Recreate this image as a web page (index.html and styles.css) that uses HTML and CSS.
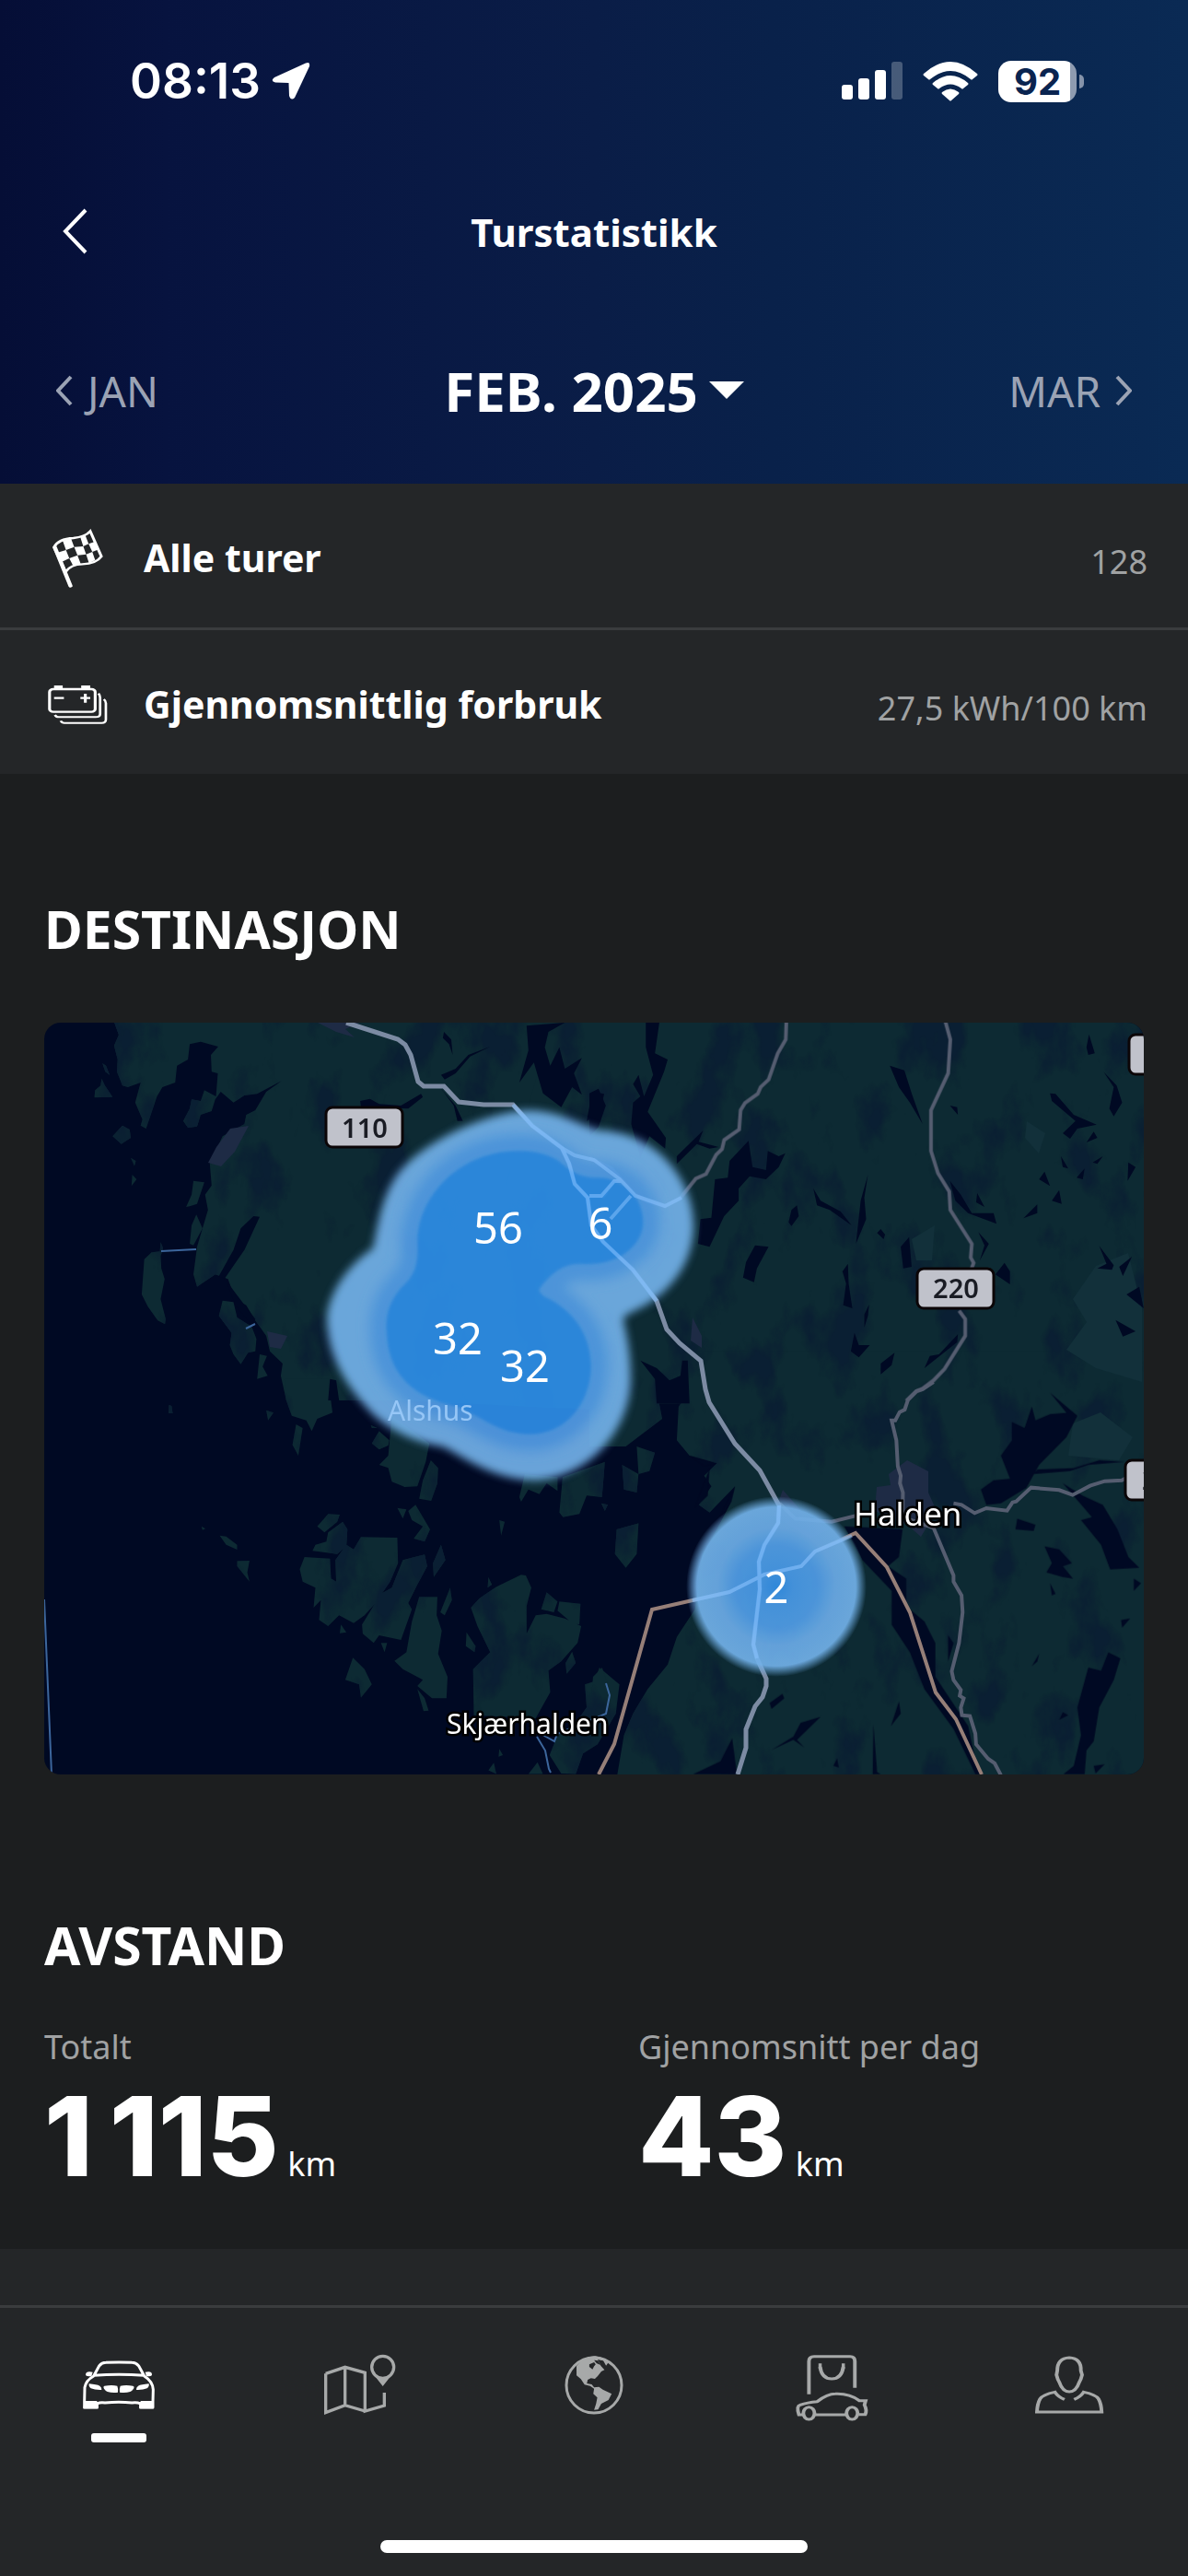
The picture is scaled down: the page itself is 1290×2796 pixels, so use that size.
FILE: index.html
```html
<!DOCTYPE html>
<html lang="no">
<head>
    <meta charset="UTF-8">
    <meta name="viewport" content="width=device-width, initial-scale=1.0">
    <title>Turstatistikk</title>
    <link rel="stylesheet" href="styles.css">
</head>
<body>
    <header class="header">
        <div class="status-bar">
            <div class="status-left">
                <span class="clock">08:13</span>
                <svg width="42" height="42" viewBox="0 0 42 42" fill="#fff"><path d="M37 1.500Q42-.5 41 5L25 39Q21 43 19 37L18.500 23 4 22.500Q-2 21 3 17Z"/></svg>
            </div>
            <div class="status-right">
                <svg width="66" height="42" viewBox="0 0 66 42" fill="#fff">
                    <rect x="0" y="25" width="12" height="16" rx="3"/>
                    <rect x="18" y="18" width="12" height="23" rx="3"/>
                    <rect x="36" y="9" width="12" height="32" rx="3"/>
                    <rect x="54" y="0" width="12" height="41" rx="3" opacity=".25"/>
                </svg>
                <svg width="60" height="43" viewBox="0 0 60 43" fill="#fff">
                    <path d="M1 13Q30-13 59 13Q60 14 59 15L54 19Q53 20 52 19Q30 1 8 19Q7 20 6 19L1 15Q0 14 1 13Z"/>
                    <path d="M11 23Q30 7 49 23Q50 24 49 25L44 29Q43 30 42 29Q30 20 18 29Q17 30 16 29L11 25Q10 24 11 23Z"/>
                    <path d="M21 33Q30 26 39 33Q40 34 39 35L31 42Q30 43 29 42L21 35Q20 34 21 33Z"/>
                </svg>
                <div class="battery">92</div>
            </div>
        </div>
        <div class="title-bar">
            <button class="back" aria-label="Tilbake">
                <svg width="28" height="50" viewBox="0 0 28 50" fill="none" stroke="#fff" stroke-width="4"><path d="M26 2 4 25 26 48"/></svg>
            </button>
            <h1>Turstatistikk</h1>
        </div>
        <div class="months">
            <button class="month">
                <svg width="18" height="34" viewBox="0 0 18 34"><path d="M16 2 2 17 16 32"/></svg>
                JAN
            </button>
            <button class="month-current">
                FEB. 2025
                <svg width="38" height="20" viewBox="0 0 38 20" fill="#fff"><path d="M0 0H38L19 19Z"/></svg>
            </button>
            <button class="month next">
                MAR
                <svg width="18" height="34" viewBox="0 0 18 34"><path d="M2 2 16 17 2 32"/></svg>
            </button>
        </div>
    </header>

    <div class="row">
        <svg width="72" height="72" viewBox="0 0 72 72">
            <g transform="scale(.4464 .3333) translate(-107 -141)">
                <path d="M133 223 171 348" stroke="#fff" stroke-width="10" stroke-linecap="round"/>
                <path d="M131 222Q142 194 178 192Q207 188 219 170L246 252Q233 276 200 277Q171 278 159 302Z" fill="none" stroke="#fff" stroke-width="7"/>
                <path fill="#fff" d="M152 201 172 193 180 221 160 231ZM195 190 207 183 215 211 202 219ZM138 240 160 231 168 258 148 271ZM180 221 202 219 209 245 188 248ZM215 211 232 203 240 229 224 237ZM168 258 188 248 196 277 177 281ZM209 245 224 237 231 264 216 274Z"/>
            </g>
        </svg>
        <span class="row-label">Alle turer</span>
        <span class="row-value">128</span>
    </div>
    <div class="row">
        <svg width="72" height="72" viewBox="0 0 72 72">
            <g transform="scale(.4464 .3333) translate(-107 -618)" fill="none" stroke="#fff" stroke-width="6">
                <rect x="120" y="684" width="111" height="74" rx="9" stroke-width="7"/>
                <path d="M131 678H152M197 678H219" stroke-width="12"/>
                <path d="M131 713H155M195 713H219M207 699V728" stroke-width="7"/>
                <path d="M239 698Q243 704 243 712V764Q243 775 232 775H142Q136 775 133 768"/>
                <path d="M252 717Q257 722 257 730V783Q257 794 247 794H156Q150 794 147 787"/>
            </g>
        </svg>
        <span class="row-label">Gjennomsnittlig forbruk</span>
        <span class="row-value">27,5 kWh/100 km</span>
    </div>

    <main class="content">
        <section class="destination">
            <h2>DESTINASJON</h2>
            <svg class="map" viewBox="48 1110 1194 816" preserveAspectRatio="xMidYMid slice">
                <defs>
                    <!-- darker patches scattered over the land -->
                    <filter id="terrain" x="0" y="0" width="100%" height="100%" color-interpolation-filters="sRGB">
                        <feTurbulence type="fractalNoise" baseFrequency=".02 .012" numOctaves="5" seed="3"/>
                        <feColorMatrix values="0 0 0 0 .04  0 0 0 0 .12  0 0 0 0 .2  0 0 0 5 -2.6"/>
                        <feComposite in2="SourceGraphic" operator="in" result="patches"/>
                        <feMerge><feMergeNode in="SourceGraphic"/><feMergeNode in="patches"/></feMerge>
                    </filter>
                    <filter id="soft" x="-20%" y="-20%" width="140%" height="140%"><feGaussianBlur stdDeviation="15"/></filter>
                    <filter id="softer" x="-20%" y="-20%" width="140%" height="140%"><feGaussianBlur stdDeviation="20"/></filter>
                    <filter id="edge" x="-20%" y="-20%" width="140%" height="140%"><feGaussianBlur stdDeviation="5"/></filter>
                    <radialGradient id="spot">
                        <stop offset="0" stop-color="#3391e9"/>
                        <stop offset=".2" stop-color="#4a9be9"/>
                        <stop offset=".45" stop-color="#529fe9"/>
                        <stop offset=".65" stop-color="#6cade9"/>
                        <stop offset=".88" stop-color="#73b2ea"/>
                        <stop offset="1" stop-color="#73b2ea" stop-opacity="0"/>
                    </radialGradient>
                </defs>
                <rect x="48" y="1110" width="1194" height="816" fill="#000923"/>

                <g class="land" filter="url(#terrain)">
                    <g transform="translate(40 1100) scale(.3954 .3333)">
                        <path d="M210 20 225 70 212 105 222 150 220 190 235 235 250 240 285 225 270 290 290 345 285 365 300 375 310 340 330 270 345 240 380 225 385 170 415 150 420 100 450 92 498 108 478 135 480 190 497 195 492 270 460 250 450 285 425 280 420 310 402 350 415 372 440 368 450 330 480 318 490 280 505 255 540 290 570 267 605 262 672 220 630 255 600 315 575 330 570 360 510 400 475 490 480 560 462 590 470 640 440 760 430 850 440 890 490 850 525 865 545 930 575 950 600 1000 630 1050 640 1100 675 1140 670 1180 685 1260 1000 1260 1700 1300 1700 20Z"/>
                        <path d="M180 162 190 170 200 200 188 190ZM178 212 187 235 208 272 158 274 160 250 175 235ZM235 365 255 378 258 405 232 425 208 400ZM258 470 272 480 268 497ZM262 525 274 540 260 562ZM430 545 460 550 440 620 420 628 410 630 425 590ZM438 655 455 700 430 755 420 750 425 690ZM340 745 347 765 340 790 342 830 351 865 340 930 354 995 352 1012 332 1000 305 955 288 915 295 800 315 778 338 775ZM510 935 540 940 550 990 590 1020 603 1060 600 1100 580 1105 560 1142 540 1110 530 1080 535 1040 500 985ZM612 1110 632 1115 620 1150 634 1180 605 1190Z"/>
                    </g>
                    <g transform="translate(640 1100) scale(.3954 .3333)">
                        <path d="M-100 20H1530V1270H-400Z"/>
                    </g>
                    <g transform="translate(40 1500) scale(.3954 .3333)">
                        <path d="M680-10 685 60 700 110 740 125 755 160 770 120 812 100 800-10ZM820-20 850 50 870-10ZM363 75 370 78 373 102 362 102ZM630 92 650 100 635 125ZM712 138 730 150 718 240 702 205ZM917 140 935 150 920 150ZM940 160 968 190 965 207 940 220 920 200ZM975 110 1078 200 1068 260 1045 340 1010 342 975 325 965 280 940 270 965 240ZM1082 255 1102 280 1100 330 1083 387 1050 380 1060 320ZM1340 300 1430 310 1430 355 1400 330 1380 365 1350 350 1330 390 1325 375ZM1444 310 1560 260 1552 375 1510 370 1490 430 1445 440 1435 425Z"/>
                        <path d="M452 470 463 478 455 482ZM502 500 520 503 550 530 550 546 520 530ZM550 583 584 582 578 620 584 650 550 600ZM770 470 800 430 832 432 825 455 790 490ZM840 455 853 480 850 535 825 560 757 550 765 530 795 520 800 490ZM735 570 805 575 808 640 822 650 820 580 850 530 870 545 890 505 990 507 992 590 970 650 930 720 900 760 870 785 830 760 800 795 775 775 780 710 760 735 765 670 730 650 722 610ZM1005 580 1065 562 1072 600 1045 660 1020 720 1030 740 1000 840 940 825 925 850 895 820 893 790 945 690 975 670ZM1050 700 1100 700 1098 760 1112 810 1102 885 1128 960 1125 1030 1085 1030 1045 990 1060 970 1005 935 982 908 1015 880 1030 780ZM868 898 900 935 920 985 890 1028 885 985 847 970ZM1045 1000 1065 1030 1076 1070 1062 1072ZM1135 670 1140 710 1120 760 1108 750ZM1110 530 1122 580 1090 635 1088 590ZM1040 400 1080 480 1065 520 1035 510 1060 470 1030 450 1020 420ZM835 790 850 815 832 818ZM945 850 962 850 955 880ZM990 410 1015 415 1005 445ZM1180 815 1205 860 1202 880 1178 860Z"/>
                        <path d="M1330 628 1343 630 1358 670 1345 730 1345 820 1370 760 1400 755 1450 770 1495 795 1485 850 1440 910 1405 940 1410 1010 1370 1095 1200 1085 1198 935 1245 880 1210 795 1192 735 1215 705 1260 668ZM1400 685 1430 715 1420 750 1385 740ZM1435 715 1493 722 1490 790 1470 785 1430 745ZM1470 878 1480 915 1455 950 1452 915ZM1240 635 1250 660 1238 670ZM1545 930 1600 985 1590 1080 1540 1180 1500 1210 1480 1277 1440 1275 1408 1215 1430 1150 1480 1110 1510 1060 1505 985 1530 975ZM1375 1238 1390 1277H1350ZM1255 1240 1262 1277 1240 1265ZM1270 1195 1280 1215 1268 1220ZM1270 450 1285 455 1275 500ZM1550 395 1568 400 1560 420Z"/>
                    </g>
                    <g transform="translate(640 1500) scale(.3954 .3333)">
                        <path d="M275-100 275 30 245 80 240 190 275 240 350 265 315 305 335 340 300 400 330 425 400 340 385 400 350 480 310 560 290 740 240 830 215 920 160 1000 120 1080 95 1150 75 1290 1530 1290 1530-100ZM0 0H180L200 120 100 210H0ZM130 210 180 230 165 290 135 300ZM90 270 135 300 130 360 95 350ZM75 480 135 460 130 560 100 605 70 560ZM10 960 35 930 55 1000 35 1100 0 1100Z"/>
                    </g>
                </g>

                <g class="hills">
                    <path d="M1190 1374 1225 1360 1240 1420 1240 1500 1190 1485 1158 1465 1180 1435 1165 1410ZM1165 1545 1195 1533 1230 1560 1215 1585 1160 1580ZM1115 1217 1135 1230 1128 1252 1113 1235ZM990 1345 1015 1330 1012 1368 995 1368Z"/>
                </g>
                <g class="towns">
                    <path d="M345 1110H390L375 1117 385 1126 365 1120ZM250 1225 270 1222 255 1250 240 1266 226 1262 235 1245ZM290 1445 312 1450 305 1464 293 1462ZM965 1600 985 1585 1008 1597 1008 1620 1017 1640 1000 1668 985 1655 950 1640 952 1614 967 1612ZM752 1430 762 1450 762 1463 750 1455ZM850 1617 870 1640 900 1660 880 1670 840 1645Z"/>
                </g>

                <g class="water">
                    <g transform="translate(40 1100) scale(.3954 .3333)">
                        <path d="M888 285 915 278 940 295 1000 300 1055 262 1060 272 1020 310 890 305ZM1118 60 1138 85 1142 135 1132 100 1115 80ZM1110 200 1150 180 1185 135 1245 108 1190 140 1150 195 1120 215ZM1345 40 1450 30 1405 60 1395 110 1410 170 1435 110 1450 180 1497 145 1475 195 1497 265 1470 240 1440 305 1390 260 1365 160 1325 225 1350 120ZM1525 255 1558 262 1545 330 1510 350ZM1110 245 1150 300 1170 350 1155 350 1145 300ZM595 660 612 662 570 770 535 830 515 865 500 855 540 770 560 700ZM805 1190 822 1195 830 1260 800 1260ZM520 870 545 910 600 995 590 1015 545 950Z"/>
                    </g>
                    <g transform="translate(640 1100) scale(.3954 .3333)">
                        <path d="M155 30H192L180 130 215 150 205 190 160 320 210 405 208 440 165 400 140 470 115 360 120 290 140 270 120 230 135 200 150 270 175 200 155 110ZM0 260 25 245 45 300 25 370 0 400ZM240 465 270 430 312 382 300 418 355 435 330 440 295 425 240 490ZM437 415 448 500 485 510 490 448 520 465 538 455 520 500 485 540 440 530 410 570 410 610 370 660 330 760 298 750 305 670 335 665 345 540 380 535 385 480ZM555 640 570 625 575 660 555 692 547 680ZM455 755 492 760 460 830 452 875 422 860 430 810ZM765 525 755 600 760 670 732 750 745 610ZM615 570 635 610 690 645 720 690 660 640 625 625ZM825 170 865 185 885 260 915 360 880 290 850 240ZM878 728 885 825 862 830 855 760ZM800 702 812 720 808 735 790 715ZM710 815 712 880 722 960 697 950 705 880 695 840ZM768 948 765 985 755 1022 755 980ZM728 1040 740 1080 770 1080 740 1120 718 1100ZM838 1105 830 1145 800 1175 800 1140ZM1012 1045 1010 1070 920 1155 935 1115 960 1110ZM990 545 1020 590 1050 650 1110 650 1118 685 1040 650 1005 610ZM1065 585 1085 630 1062 615ZM1068 712 1097 750 1072 805 1085 755ZM1140 812 1155 840 1155 882 1115 850ZM990 300 1010 305 1012 330ZM1372 68 1388 130 1370 135 1365 110ZM1412 190 1448 235 1463 290 1440 335 1428 310 1440 240ZM1265 260 1280 262 1330 330 1393 362 1340 375 1320 408 1300 390 1335 350 1270 285ZM1295 465 1315 505 1300 500ZM1385 385 1395 405 1365 420ZM1410 465 1395 490 1382 485ZM1360 505 1355 540 1338 535ZM1480 485 1500 500 1478 545ZM1250 515 1265 562 1235 540ZM1290 575 1297 620 1270 610ZM1230 622 1230 650 1192 667ZM1400 757 1440 820 1435 835 1395 830 1420 815ZM1490 792 1465 855 1455 825ZM1510 890 1522 960 1475 915ZM1445 998 1500 1035 1465 1052ZM140 1130 185 1155 220 1195 250 1180 255 1130 270 1130 275 1270H185L180 1190Z"/>
                    </g>
                    <g transform="translate(640 1500) scale(.3954 .3333)">
                        <path d="M1215 80 1225 125 1265 105 1310 100 1265 35 1340 110 1310 180 1235 270 1200 345 1130 395 1090 400 1075 350 1110 320 1155 315 1130 240 1160 190 1160 130 1195 150ZM1230 285 1330 280 1400 255 1470 260 1370 270 1320 290 1220 300ZM1175 445 1225 465 1220 485 1170 480ZM1250 535 1290 545 1325 590 1300 600 1328 640 1300 635 1255 620 1270 590ZM1300 330 1355 370 1410 400 1450 480 1480 570 1510 605 1430 610 1405 530 1350 450 1380 440ZM1265 655 1280 690 1270 695ZM1495 640 1515 655 1495 680ZM1460 775 1485 770 1463 800ZM1235 885 1230 910 1215 925ZM1425 880 1458 900 1440 970 1400 1060 1385 1170 1365 1200 1360 1277H1302L1330 1250 1350 1150 1340 1060 1370 930 1405 940ZM1300 1075 1315 1085 1290 1100ZM1385 1250 1415 1245 1390 1275ZM530 1015 535 1030 500 1065 495 1045ZM635 1090 570 1165 590 1190 560 1165 500 1198 560 1155 580 1110ZM780 1115 790 1270 800 1277H778ZM850 1040 855 1080 828 1120ZM680 1225 685 1255 670 1250ZM392 1160 405 1277H285L360 1235ZM700 470 860 480 850 570 820 600 870 640 870 730 920 780 950 850 950 960 1040 1120 1060 1230 1080 1277 1060 1277 1000 1130 920 1000 880 880 830 790 830 680 750 580ZM985 825 1000 850 985 910Z"/>
                        <path d="M275 240 350 265 315 275ZM330 280 325 370 290 410ZM400 340 390 390 340 490 370 410Z"/>
                    </g>
                </g>

                <g class="ferries">
                    <path d="M175 1358 213 1356M267 1442 277 1437M48 1736 56 1926M583 1885 592 1900 596 1920 598 1924M575 1875 602 1890 605 1882 658 1860 662 1840 658 1827"/>
                </g>
                <g class="roads-minor">
                    <g transform="translate(640 1100) scale(.3954 .3333)">
                        <path d="M541 20 539 85 517 130 492 215 470 240 462 262 427 292 415 315 411 378 370 412 364 442 348 460 320 523 292 538 250 600 208 628 160 612 125 590 95 550 60 505 0 470M0 595H38L68 545H95M976 20 991 85 985 195 938 315V448L957 520 988 580 991 640 1050 750 1047 795 1055 812 1048 835M1015 968 1032 995V1050L975 1158 945 1195 915 1222 898 1230 870 1262"/>
                    </g>
                    <g transform="translate(640 1500) scale(.3954 .3333)">
                        <path d="M945 0 915 24 898 30 875 58 866 90 852 98 840 125 830 125 843 190 847 275 855 305 853 330 861 360 860 440 945 475 1000 630V650L1022 695 1025 750 1015 850 995 942 1000 970 1020 1003 1017 1022 1028 1030 1020 1060 1023 1085 1045 1088 1060 1145 1062 1180 1095 1227 1113 1242 1130 1280M522 395 565 445 665 455 740 433M1000 395 1022 400 1058 427 1090 411 1147 419 1162 392 1172 389 1213 344 1290 352 1327 368 1375 338 1415 323 1462 320 1475 312"/>
                    </g>
                </g>
                <path class="road-main" d="M376 1110 432 1128 440 1134 446 1145 454 1174 460 1179 482 1179 498 1196 525 1199 557 1199 578 1222 610 1246 618 1263 624 1285 638 1300 642 1330 655 1348 687 1378 713 1412 724 1443 738 1458 761 1477 766 1508 770 1522 798 1567 825 1596 846 1634 845 1653 830 1677 824 1695 825 1725 818 1785 822 1800 832 1822V1830L828 1842 820 1852 810 1877V1897L801 1926"/>
                <path class="border" d="M650 1926 667 1893 708 1747 752 1737 792 1728 830 1709 870 1700 885 1684 929 1664 963 1701 988 1750 1016 1837 1038 1866 1066 1926"/>

                <!-- heat areas -->
                <g opacity=".92">
                    <g transform="translate(340 1200) scale(.3333)">
                        <path filter="url(#soft)" fill="#73b2ea" d="M700 15C560 20 330 130 265 240C225 300 210 390 195 465C110 520 45 620 45 700C50 830 120 930 200 1010C270 1070 350 1100 420 1110C470 1130 580 1220 720 1220C900 1215 1035 1050 1035 890C1035 800 1020 740 1010 695C1015 680 1060 665 1100 640C1200 570 1240 480 1240 385C1235 230 1110 85 930 80C860 60 800 15 700 15Z"/>
                        <path filter="url(#softer)" fill="#529fe9" stroke="#529fe9" stroke-width="110" stroke-linejoin="round" d="M665 148C480 150 345 290 340 440C342 500 340 540 300 580C250 630 235 680 240 740C245 870 320 950 470 980C560 1020 610 1070 710 1070C820 1070 905 970 905 850C905 740 840 660 750 620C730 600 735 600 750 580C790 530 830 515 870 515C1000 525 1075 450 1075 380C1075 290 1000 235 930 235C880 235 850 225 800 180C760 155 710 145 665 148Z"/>
                        <path filter="url(#edge)" fill="#2f8fe9" d="M665 148C480 150 345 290 340 440C342 500 340 540 300 580C250 630 235 680 240 740C245 870 320 950 470 980C560 1020 610 1070 710 1070C820 1070 905 970 905 850C905 740 840 660 750 620C730 600 735 600 750 580C790 530 830 515 870 515C1000 525 1075 450 1075 380C1075 290 1000 235 930 235C880 235 850 225 800 180C760 155 710 145 665 148Z"/>
                    </g>
                    <circle cx="843" cy="1722" r="98" fill="url(#spot)"/>
                </g>
                <g class="roads-under">
                    <path d="M557 1199 578 1222 610 1246 618 1263 624 1285 638 1300 642 1330 655 1348 687 1378 713 1412M610 1246 624 1254 645 1259 673 1280 690 1298 722 1309 740 1300M640 1298H653L667 1282H675M663 1323 685 1298M846 1634 845 1653 830 1677 824 1695 825 1725 818 1785 822 1800M752 1737 792 1728 830 1709 870 1700 885 1684 925 1667"/>
                </g>

                <g class="counts">
                    <text x="541" y="1350">56</text>
                    <text x="652" y="1345">6</text>
                    <text x="497" y="1470">32</text>
                    <text x="570" y="1500">32</text>
                    <text x="843" y="1740">2</text>
                </g>
                <text class="place faded" x="421" y="1542">Alshus</text>
                <text class="place" x="485" y="1882">Skjærhalden</text>
                <text class="place city" x="927" y="1656">Halden</text>

                <g class="shields">
                    <rect x="354" y="1202" width="83" height="43" rx="7"/>
                    <rect x="996" y="1377" width="83" height="43" rx="7"/>
                    <rect x="1226" y="1123" width="83" height="43" rx="7"/>
                    <rect x="1222" y="1585" width="83" height="43" rx="7"/>
                    <text x="396" y="1235">110</text>
                    <text x="1038" y="1409">220</text>
                    <text x="1265" y="1617">220</text>
                </g>
            </svg>
        </section>

        <section class="distance">
            <h2>AVSTAND</h2>
            <dl class="stats">
                <div class="stat">
                    <dt>Totalt</dt>
                    <dd><strong>1&#8201;115</strong> km</dd>
                </div>
                <div class="stat">
                    <dt>Gjennomsnitt per dag</dt>
                    <dd><strong>43</strong> km</dd>
                </div>
            </dl>
        </section>
    </main>

    <nav class="tab-bar">
        <div class="tabs">
            <a class="tab active" href="#" aria-label="Bil">
                <svg width="90" height="90" viewBox="132 70 270 270">
                    <g fill="none" stroke="#fff" stroke-width="9" stroke-linejoin="round">
                        <path d="M185 178 203 145Q212 134 225 134Q267 132 310 134Q322 134 332 145L350 178Q378 196 379 222L378 262V280H338V268Q325 262 310 265Q267 260 222 265Q208 262 196 268V280H155V262L156 215Q160 192 185 178ZM186 176Q267 170 349 176"/>
                        <path d="M159 262H196M338 262H378" stroke-width="6"/>
                    </g>
                    <path fill="#fff" d="M155 262H200V284H151ZM334 262H380V284H334ZM182 165Q160 160 159 173Q159 181 178 178ZM353 165Q375 160 375 173Q375 181 357 178ZM170 203Q195 205 205 210Q212 215 211 223Q190 224 176 218Q168 212 170 203ZM365 203Q340 205 330 210Q323 215 324 223Q345 224 359 218Q367 212 365 203ZM220 210Q245 206 262 210Q266 220 264 231Q245 233 230 229Q218 222 217 213ZM313 210Q290 206 272 210Q268 220 270 231Q290 233 304 229Q316 222 317 213Z"/>
                </svg>
            </a>
            <a class="tab" href="#" aria-label="Kart">
                <svg width="90" height="90" viewBox="906 70 270 270" fill="none" stroke="#a7a9a9" stroke-width="10">
                    <path d="M941 170 1004 149 1069 167V292L1132 274V232M1069 292 1004 273 941 297V170M1004 149V273"/>
                    <circle cx="1127" cy="149" r="36"/>
                    <path d="M1091 165 1127 211 1163 165Q1127 200 1091 165Z" fill="#a7a9a9" stroke="none"/>
                </svg>
            </a>
            <a class="tab" href="#" aria-label="Utforsk">
                <svg width="90" height="90" viewBox="0 0 90 90">
                    <circle cx="45" cy="46" r="30" fill="none" stroke="#a7a9a9" stroke-width="3"/>
                    <g transform="scale(.4337 .3333) translate(-92 -70)">
                        <path fill="#a7a9a9" d="M152 145Q175 110 200 113Q232 120 250 152L232 133 226 144 219 128 205 124 213 145 222 158 214 163 205 178 198 187 188 185 180 190 178 202 190 205 196 215 208 213 218 222 240 236 232 256 214 268 206 287 196 288 201 268 204 248 194 236 196 219 186 210 172 206 163 188 152 176Z"/>
                        <path fill="#242628" d="M184 140 196 133 200 140 196 146 192 156 184 148ZM196 126 206 128 212 142 202 136Z"/>
                    </g>
                </svg>
            </a>
            <a class="tab" href="#" aria-label="Butikk">
                <svg width="90" height="90" viewBox="0 0 90 90">
                    <g transform="scale(.4337 .3333) translate(-687 -70)" fill="none" stroke="#a7a9a9" stroke-width="9">
                        <path d="M734 237V130Q734 114 747 114H837Q849 114 849 130V216"/>
                        <path d="M762 148Q766 187 791 187Q816 187 820 148"/>
                        <path d="M718 304H709Q702 275 712 272Q730 264 755 261Q780 236 800 236Q835 234 860 258H876L873 272Q880 290 875 303H859M750 304H826"/>
                        <ellipse cx="734" cy="299" rx="14" ry="20"/>
                        <ellipse cx="842" cy="299" rx="14" ry="20"/>
                        <path d="M758 146H766M816 146H824" stroke-width="18"/>
                    </g>
                </svg>
            </a>
            <a class="tab" href="#" aria-label="Profil">
                <svg width="90" height="90" viewBox="0 0 90 90">
                    <g transform="scale(.4337 .3333) translate(-1282 -70)" fill="none" stroke="#a7a9a9" stroke-width="9">
                        <path d="M1386 118Q1416 120 1415 160L1418 174Q1415 190 1411 198Q1403 229 1386 229Q1369 229 1361 198Q1357 190 1354 174L1356 160Q1356 120 1386 118Z"/>
                        <path d="M1374 254Q1358 246 1350 230Q1320 238 1313 252Q1306 268 1305 295H1467Q1466 268 1459 252Q1452 238 1422 230Q1414 246 1398 254"/>
                    </g>
                </svg>
            </a>
        </div>
        <div class="home-indicator"></div>
    </nav>
</body>
</html>
```
FILE: styles.css
```css
* {
    box-sizing: border-box;
}
body {
    margin: 0;
    min-height: 100vh;
    display: flex;
    flex-direction: column;
    background: #242628;
    color: #fff;
    font-family: "Noto Sans", sans-serif;
}
h1, h2, dl, dt, dd {
    margin: 0;
}
button {
    background: none;
    border: none;
    padding: 0;
    color: inherit;
    font-family: inherit;
    cursor: pointer;
}
svg {
    display: block;
}

/* header */
.header {
    background: linear-gradient(90deg, #050e36 0%, #07133f 14%, #0a1d47 50%, #09214a 65%, #0a2a54 100%);
}
.status-bar {
    height: 176px;
    padding: 0 121px 0 141px;
    display: flex;
    justify-content: space-between;
    align-items: center;
    font-family: Inter, sans-serif;
}
.status-left {
    display: flex;
    align-items: center;
    gap: 12px;
}
.clock {
    font-size: 53px;
    font-weight: 600;
}
.status-right {
    display: flex;
    align-items: center;
    gap: 22px;
}
.battery {
    position: relative;
    width: 85px;
    height: 45px;
    border-radius: 14px;
    background: linear-gradient(90deg, #fff 92%, #8e9bb0 92%);
    color: #0a2450;
    font-size: 40px;
    font-weight: 700;
    line-height: 45px;
    text-align: center;
}
.battery::after {
    content: "";
    position: absolute;
    right: -8px;
    top: 15px;
    width: 5px;
    height: 15px;
    border-radius: 0 5px 5px 0;
    background: #8593aa;
}
.title-bar {
    height: 150px;
    padding: 0 67px;
    display: grid;
    grid-template-columns: 1fr auto 1fr;
    align-items: center;
}
.title-bar h1 {
    font-size: 42px;
}
.back {
    justify-self: start;
}
.months {
    height: 199px;
    padding: 0 61px 4px;
    display: grid;
    grid-template-columns: 1fr auto 1fr;
    align-items: center;
}
.month {
    display: flex;
    align-items: center;
    gap: 16px;
    color: #9ba3b4;
    font-size: 46px;
}
.month svg {
    fill: none;
    stroke: #9ba3b4;
    stroke-width: 4;
}
.month.next {
    justify-self: end;
}
.month-current {
    display: flex;
    align-items: center;
    gap: 12px;
    font-size: 60px;
    font-weight: 700;
}

/* summary rows */
.row {
    height: 156px;
    padding: 0 44px 0 48px;
    display: flex;
    align-items: center;
    background: #242628;
}
.row + .row {
    height: 159px;
    border-top: 3px solid #3a3c3e;
}
.row-label {
    margin-left: 36px;
    padding-top: 4px;
    font-size: 41px;
    font-weight: 700;
}
.row-value {
    margin-left: auto;
    padding-top: 12px;
    color: #a0a2a3;
    font-size: 36px;
}

/* content */
.content {
    padding: 0 48px;
    background: #1c1e1f;
}
h2 {
    font-size: 57px;
    line-height: 80px;
}
.destination {
    padding-top: 128px;
}
.map {
    width: 100%;
    margin-top: 62px;
    border-radius: 18px;
}
.land {
    fill: #0d2a33;
}
.hills {
    fill: #12303a;
}
.towns {
    fill: #1e2b45;
}
.water {
    fill: #000923;
}
.ferries, .roads-minor, .roads-under, .road-main, .border {
    fill: none;
}
.ferries path {
    stroke: #3c669c;
    stroke-width: 2;
}
.roads-minor path {
    stroke: #555d70;
    stroke-width: 4;
    vector-effect: non-scaling-stroke;
}
.road-main {
    stroke: #7c8ba3;
    stroke-width: 5;
}
.border {
    stroke: #967f78;
    stroke-width: 4;
}
.roads-under path {
    stroke: #8cc4ff;
    stroke-width: 4;
    opacity: .5;
}
.counts {
    fill: #fff;
    font-size: 47px;
    text-anchor: middle;
}
.place {
    fill: #fff;
    stroke: #000;
    stroke-width: 5;
    paint-order: stroke;
    font-size: 30px;
}
.place.city {
    font-size: 35px;
}
.place.faded {
    fill: #96c6f6;
    stroke: none;
}
.shields rect {
    fill: #c0c2cb;
    stroke: #0b0507;
    stroke-width: 3;
}
.shields text {
    fill: #1a1c24;
    font-size: 29px;
    font-weight: 600;
    text-anchor: middle;
}

.distance {
    padding: 145px 0 60px;
}
.stats {
    margin-top: 46px;
    display: grid;
    grid-template-columns: 1fr 1fr;
}
.stat:last-child {
    padding-left: 48px;
}
.stat dt {
    color: #a0a2a3;
    font-size: 36px;
    line-height: 50px;
}
.stat dd {
    padding-top: 10px;
    font-size: 36px;
    line-height: 36px;
}
.stat strong {
    font-family: Inter, sans-serif;
    font-size: 120px;
    font-weight: 800;
    line-height: 124px;
}

/* bottom navigation */
.tab-bar {
    margin-top: auto;
    padding: 38px 0 25px;
    border-top: 3px solid #3a3c3e;
    background: #242628;
}
.tabs {
    display: grid;
    grid-template-columns: repeat(5, 1fr);
    justify-items: center;
}
.tab.active::after {
    content: "";
    display: block;
    width: 60px;
    height: 10px;
    margin: 8px auto 0;
    border-radius: 3px;
    background: #fff;
}
.home-indicator {
    width: 36%;
    height: 14px;
    margin: 106px auto 0;
    border-radius: 7px;
    background: #fff;
}
```
